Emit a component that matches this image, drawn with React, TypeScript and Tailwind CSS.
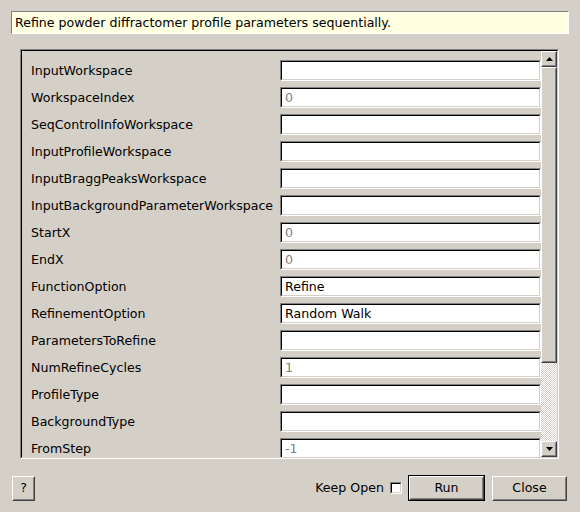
import React from "react";

const rows: { label: string; value: string; dim?: boolean }[] = [
  { label: "InputWorkspace", value: "" },
  { label: "WorkspaceIndex", value: "0", dim: true },
  { label: "SeqControlInfoWorkspace", value: "" },
  { label: "InputProfileWorkspace", value: "" },
  { label: "InputBraggPeaksWorkspace", value: "" },
  { label: "InputBackgroundParameterWorkspace", value: "" },
  { label: "StartX", value: "0", dim: true },
  { label: "EndX", value: "0", dim: true },
  { label: "FunctionOption", value: "Refine" },
  { label: "RefinementOption", value: "Random Walk" },
  { label: "ParametersToRefine", value: "" },
  { label: "NumRefineCycles", value: "1", dim: true },
  { label: "ProfileType", value: "" },
  { label: "BackgroundType", value: "" },
  { label: "FromStep", value: "-1", dim: true },
];

function Raised({ children, className }: { children?: React.ReactNode; className?: string }) {
  return (
    <div className={"border border-t-white border-l-white border-b-[#404040] border-r-[#404040] " + (className ?? "")}>
      <div className="w-full h-full border border-t-[#d4d0c8] border-l-[#d4d0c8] border-b-[#808080] border-r-[#808080] flex items-center justify-center">
        {children}
      </div>
    </div>
  );
}

function Arrow({ up }: { up?: boolean }) {
  return (
    <svg width="7" height="4" viewBox="0 0 7 4">
      {up ? <polygon points="3.5,0 7,4 0,4" fill="#000" /> : <polygon points="0,0 7,0 3.5,4" fill="#000" />}
    </svg>
  );
}

export default function App() {
  return (
    <div className="w-[580px] h-[512px] bg-[#d4d0c8] overflow-hidden text-[12.6px] text-black" style={{ fontFamily: '"DejaVu Sans", sans-serif' }}>
      <div className="ml-[11px] mt-[11px] w-[558px] h-[23px] border border-t-[#808080] border-l-[#808080] border-b-white border-r-white bg-[#ffffe1] pl-[3px] leading-[21px] whitespace-nowrap">
        Refine powder diffractomer profile parameters sequentially.
      </div>

      <div className="ml-[20px] mt-[15px] w-[539px] h-[410px] border border-t-[#808080] border-l-[#808080] border-b-white border-r-white">
        <div className="w-full h-full border border-t-black border-l-black border-b-[#d4d0c8] border-r-[#d4d0c8] flex overflow-hidden">
          <div className="flex-1 overflow-hidden pt-[9px]">
            <div className="grid grid-cols-[258px_261px] auto-rows-[21px] gap-y-[6px]">
              {rows.map((r) => (
                <React.Fragment key={r.label}>
                  <div className="pl-[9px] leading-[21px] whitespace-nowrap">{r.label}</div>
                  <div className="h-[21px] border border-t-[#808080] border-l-[#808080] border-b-white border-r-white">
                    <div className="h-full border border-t-black border-l-black border-b-[#d4d0c8] border-r-[#d4d0c8] bg-white pl-[3px] leading-[17px] whitespace-nowrap">
                      <span className={r.dim ? "text-[#808080]" : "text-black"}>{r.value}</span>
                    </div>
                  </div>
                </React.Fragment>
              ))}
            </div>
          </div>
          <div className="w-[16px] flex flex-col">
            <Raised className="h-[16px] w-[16px] shrink-0">
              <Arrow up />
            </Raised>
            <Raised className="h-[296px] w-[16px] shrink-0 bg-[#d4d0c8]" />
            <div className="flex-1 bg-[repeating-conic-gradient(#d4d0c8_0%_25%,#ffffff_0%_50%)] bg-[length:2px_2px]" />
            <Raised className="h-[16px] w-[16px] shrink-0">
              <Arrow />
            </Raised>
          </div>
        </div>
      </div>

      <div className="mt-[16px] h-[26px] pl-[12px] pr-[13px] flex items-center">
        <Raised className="w-[23px] h-[25px]">
          <span className="leading-none">?</span>
        </Raised>
        <div className="flex-1" />
        <span className="whitespace-nowrap">Keep Open</span>
        <div className="ml-[6px] w-[12px] h-[12px] border border-t-[#808080] border-l-[#808080] border-b-white border-r-white">
          <div className="w-full h-full border border-t-black border-l-black border-b-[#d4d0c8] border-r-[#d4d0c8] bg-white" />
        </div>
        <div className="ml-[6px] w-[77px] h-[26px] border border-black">
          <Raised className="w-full h-full">
            <span>Run</span>
          </Raised>
        </div>
        <Raised className="ml-[7px] w-[75px] h-[25px]">
          <span>Close</span>
        </Raised>
      </div>
    </div>
  );
}
